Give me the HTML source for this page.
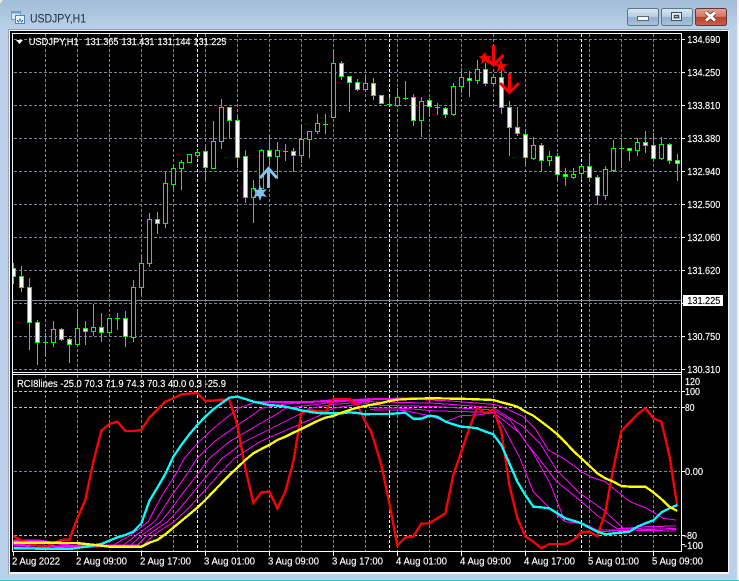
<!DOCTYPE html>
<html>
<head>
<meta charset="utf-8">
<title>USDJPY,H1</title>
<style>
html,body{margin:0;padding:0;width:739px;height:581px;overflow:hidden;background:#b9d1ea}
svg{display:block;position:absolute;left:0;top:0}
text{font-family:"Liberation Sans",sans-serif;font-size:10px;fill:#fff;stroke:#fff;stroke-width:.15px}
.c{shape-rendering:crispEdges;fill:none}
</style>
</head>
<body>
<svg width="739" height="581" viewBox="0 0 739 581" xmlns="http://www.w3.org/2000/svg">
<defs>
<linearGradient id="tb" x1="0" y1="0" x2="0" y2="1"><stop offset="0" stop-color="#a3bcd7"/><stop offset="1" stop-color="#b9d1ea"/></linearGradient>
<linearGradient id="bg" x1="0" y1="0" x2="0" y2="1"><stop offset="0" stop-color="#dbe8f5"/><stop offset=".48" stop-color="#b7cde4"/><stop offset=".52" stop-color="#93afcd"/><stop offset="1" stop-color="#a9c3de"/></linearGradient>
<linearGradient id="rd" x1="0" y1="0" x2="0" y2="1"><stop offset="0" stop-color="#e3a194"/><stop offset=".48" stop-color="#d27866"/><stop offset=".52" stop-color="#b8402c"/><stop offset="1" stop-color="#c9624c"/></linearGradient>
<clipPath id="mc"><rect x="13" y="34" width="668" height="338"/></clipPath>
<clipPath id="sc"><rect x="13" y="375" width="668" height="176"/></clipPath>
</defs>

<!-- window chrome -->
<rect x="0" y="0" width="739" height="581" fill="#b9d1ea"/>
<rect x="0" y="0" width="739" height="30" fill="url(#tb)"/>
<polygon points="0,0 3,0 0,4" fill="#e8e8e8"/>
<rect x="737" y="0" width="2" height="581" fill="#f0f0f0"/>
<rect x="0" y="580" width="739" height="1" fill="#39c6d3"/>
<rect x="8" y="29" width="722" height="545" fill="#f4f4f4"/>
<rect x="8" y="29" width="1" height="545" fill="#9aa6b2"/>
<rect x="8" y="29" width="722" height="1" fill="#8ea3b8"/>
<rect x="729" y="29" width="1" height="545" fill="#cfd4da"/>
<rect x="10" y="31" width="718" height="541" fill="#000"/>

<!-- title -->
<g class="c">
<rect x="11.500" y="11.500" width="9" height="8" fill="#dbe8f6" stroke="#6a9ccc"/>
<rect x="11.500" y="11.500" width="9" height="2" fill="#6a9ccc" stroke="none"/>
<rect x="15.500" y="15.500" width="9" height="8" fill="#eef4fb" stroke="#4b86c0"/>
<path d="M17 20l1.500 2 1.500-3 1.500 3 1.500-2" stroke="#3a70a8"/>
</g>
<text x="30" y="22.500" textLength="56" lengthAdjust="spacingAndGlyphs" style="font-size:12px;fill:#16283a;stroke:none">USDJPY,H1</text>

<!-- buttons -->
<rect x="627.500" y="8.500" width="31" height="17" rx="2" fill="url(#bg)" stroke="#5f7488"/>
<rect x="661.500" y="8.500" width="31" height="17" rx="2" fill="url(#bg)" stroke="#5f7488"/>
<rect x="695.500" y="8.500" width="31" height="17" rx="2" fill="url(#rd)" stroke="#5a3a38"/>
<rect x="637.500" y="16.500" width="11" height="4" fill="#f4f6f8" stroke="#56687a"/>
<rect x="671.500" y="12.500" width="10" height="8" fill="none" stroke="#3f4f60" />
<rect x="672.500" y="13.500" width="8" height="6" fill="none" stroke="#eef2f6"/>
<rect x="674.500" y="15.500" width="4" height="2" fill="#9fb6cc" stroke="#3f4f60"/>
<path d="M706 12.500l9 8M715 12.500l-9 8" stroke="#4a2d2b" stroke-width="4.500"/>
<path d="M706 12.500l9 8M715 12.500l-9 8" stroke="#fff" stroke-width="3"/>

<!-- frame -->
<g class="c" stroke="#fff">
<path d="M12.500 33.500H681.500V551.500H12.500ZM12 372.500H682M12 374.500H682"/>
</g>

<!-- grid -->
<g class="c" stroke="#778899" stroke-dasharray="3 2">
<path d="M14 39.500H680M14 72.500H680M14 105.500H680M14 138.500H680M14 171.500H680M14 204.500H680M14 237.500H680M14 270.500H680M14 303.500H680M14 336.500H680M14 369.500H680M14 471.500H680"/>
<path d="M45.500 34V372M77.500 34V372M109.500 34V372M141.500 34V372M173.500 34V372M205.500 34V372M237.500 34V372M269.500 34V372M301.500 34V372M333.500 34V372M365.500 34V372M397.500 34V372M429.500 34V372M461.500 34V372M493.500 34V372M525.500 34V372M557.500 34V372M589.500 34V372M621.500 34V372M653.500 34V372"/>
<path d="M45.500 375V551M77.500 375V551M109.500 375V551M141.500 375V551M173.500 375V551M205.500 375V551M237.500 375V551M269.500 375V551M301.500 375V551M333.500 375V551M365.500 375V551M397.500 375V551M429.500 375V551M461.500 375V551M493.500 375V551M525.500 375V551M557.500 375V551M589.500 375V551M621.500 375V551M653.500 375V551"/>
</g>
<g class="c" stroke="#fff" stroke-dasharray="3 2">
<path d="M197.500 34V372M389.500 34V372M581.500 34V372M197.500 375V551M389.500 375V551M581.500 375V551"/>
</g>
<g class="c" stroke="#c0c0c0" stroke-dasharray="3 2">
<path d="M14 391.500H680M14 407.500H680M14 535.500H680"/>
</g>
<path class="c" stroke="#778899" d="M13 300.500H681"/>

<!-- candles -->
<g clip-path="url(#mc)">
<path class="c" stroke="#00ff00" d="M13.500 263V284M21.500 266V292M29.500 278V350M37.500 320V365M45.500 333V355M53.500 321V347M61.500 328V341M69.500 338V363M77.500 309V346M85.500 321V345M93.500 304V336M101.500 313V342M109.500 318V334M117.500 313V330M125.500 311V347M133.500 280V342M141.500 255V296M149.500 213V267M157.500 212V234M165.500 172V228M173.500 165V190M181.500 160V190M189.500 154V163M197.500 150V158M205.500 146V181M213.500 121V169M221.500 99V149M229.500 107V138M237.500 117V168M245.500 150V203M253.500 180V223M261.500 149V191M269.500 135V164M277.500 142V179M285.500 144V161M293.500 148V172M301.500 124V163M309.500 131V158M317.500 114V134M325.500 114V134M333.500 50V118M341.500 61V80M349.500 76V112M357.500 79V91M365.500 75V91M373.500 78V100M381.500 95V104M389.500 97V106M397.500 88V106M405.500 81V100M413.500 94V126M421.500 97V137M429.500 98V117M437.500 103V115M445.500 107V118M453.500 83V116M461.500 68V93M469.500 71V97M477.500 60V84M485.500 63V86M493.500 74V85M501.500 70V114M509.500 101V156M517.500 107V136M525.500 129V164M533.500 137V160M541.500 143V172M549.500 151V166M557.500 153V180M565.500 168V186M573.500 168V179M581.500 165V180M589.500 153V179M597.500 175V205M605.500 166V200M613.500 140V172M621.500 140V168M629.500 148V161M637.500 138V156M645.500 131V153M653.500 133V162M661.500 137V160M669.500 143V164M677.500 154V181"/>
<path class="c" stroke="#00ff00" d="M43 342.500h5M115 318.500h5M283 151.500h5M323 124.500h5M387 104.500h5M403 98.500h5M435 107.500h5M619 148.500h5"/>
<path class="c" stroke="#00ff00" style="fill:#fff" d="M11.500 268.500h4v8h-4zM19.500 276.500h4v11h-4zM27.500 287.500h4v35h-4zM35.500 322.500h4v20h-4zM59.500 329.500h4v10h-4zM67.500 339.500h4v5h-4zM83.500 328.500h4v3h-4zM99.500 327.500h4v5h-4zM123.500 318.500h4v18h-4zM155.500 219.500h4v4h-4zM203.500 151.500h4v16h-4zM227.500 107.500h4v13h-4zM235.500 120.500h4v37h-4zM243.500 156.500h4v41h-4zM267.500 150.500h4v6h-4zM291.500 151.500h4v4h-4zM339.500 63.500h4v13h-4zM347.500 76.500h4v6h-4zM355.500 82.500h4v7h-4zM371.500 83.500h4v12h-4zM379.500 95.500h4v8h-4zM411.500 97.500h4v23h-4zM427.500 100.500h4v6h-4zM443.500 108.500h4v6h-4zM467.500 78.500h4v2h-4zM483.500 69.500h4v14h-4zM499.500 77.500h4v30h-4zM507.500 107.500h4v20h-4zM515.500 127.500h4v6h-4zM523.500 134.500h4v23h-4zM539.500 145.500h4v15h-4zM555.500 156.500h4v18h-4zM563.500 174.500h4v2h-4zM587.500 166.500h4v11h-4zM595.500 177.500h4v18h-4zM627.500 148.500h4v2h-4zM643.500 142.500h4v3h-4zM651.500 145.500h4v13h-4zM667.500 144.500h4v16h-4zM675.500 160.500h4v3h-4z"/>
<path class="c" stroke="#00ff00" style="fill:#000" d="M51.500 329.500h4v13h-4zM75.500 328.500h4v16h-4zM91.500 327.500h4v4h-4zM107.500 318.500h4v14h-4zM131.500 287.500h4v50h-4zM139.500 263.500h4v24h-4zM147.500 219.500h4v44h-4zM163.500 183.500h4v40h-4zM171.500 168.500h4v16h-4zM179.500 162.500h4v6h-4zM187.500 154.500h4v8h-4zM195.500 152.500h4v3h-4zM211.500 141.500h4v27h-4zM219.500 107.500h4v34h-4zM251.500 188.500h4v9h-4zM259.500 150.500h4v38h-4zM275.500 150.500h4v6h-4zM299.500 139.500h4v16h-4zM307.500 131.500h4v8h-4zM315.500 123.500h4v8h-4zM331.500 63.500h4v54h-4zM363.500 83.500h4v6h-4zM395.500 97.500h4v8h-4zM419.500 101.500h4v19h-4zM451.500 86.500h4v28h-4zM459.500 77.500h4v9h-4zM475.500 69.500h4v11h-4zM491.500 77.500h4v6h-4zM531.500 145.500h4v13h-4zM547.500 156.500h4v4h-4zM571.500 174.500h4v3h-4zM579.500 166.500h4v7h-4zM603.500 169.500h4v26h-4zM611.500 148.500h4v22h-4zM635.500 142.500h4v8h-4zM659.500 144.500h4v14h-4z"/>
</g>

<!-- arrows and stars -->
<g fill="none" stroke="#87c3ea" stroke-width="3">
<path d="M268.500 168V188M260 178L268.500 168.500 277 178"/>
</g>
<polygon transform="translate(260 193)" fill="#7fc4ec" points="0,-8 1.750,-3 6.900,-4 3.500,0 6.900,4 1.750,3 0,8 -1.750,3 -6.900,4 -3.500,0 -6.900,-4 -1.750,-3"/>
<g fill="#f00">
<polygon transform="translate(485 58.500)" points="0,-7 1.800,-2.300 6.700,-2.200 2.900,.9 4.100,5.700 0,3 -4.100,5.700 -2.900,.9 -6.700,-2.200 -1.800,-2.300"/>
<polygon transform="translate(501 66.500)" points="0,-7 1.800,-2.300 6.700,-2.200 2.900,.9 4.100,5.700 0,3 -4.100,5.700 -2.900,.9 -6.700,-2.200 -1.800,-2.300"/>
</g>
<g fill="none" stroke="#f00" stroke-width="3">
<path d="M493.500 45V64M482.500 55L493.500 65 503.500 55"/>
<path d="M509.500 73V92M500 83L509.500 92.500 519 83"/>
</g>

<!-- RCI lines -->
<g clip-path="url(#sc)" fill="none" shape-rendering="crispEdges">
<g transform="translate(0 375) scale(.33333)">
<g stroke="#f0f" stroke-width="3">
<polyline points="340,510 393,480 445,440 465,400 493,350 526,300 553,250 597,200 652,150 690,120 714,100 760,84 850,80 1110,78"/>
<polyline points="370,510 410,480 464,440 490,400 523,350 559,300 591,250 643,200 713,150 758,120 785,100 850,88 950,78 1110,74"/>
<polyline points="390,512 426,480 483,440 515,400 552,350 591,300 628,250 688,200 773,150 826,120 856,100 950,88 1030,78 1110,74"/>
<polyline points="410,512 443,480 503,440 540,400 581,350 623,300 666,250 734,200 834,150 894,120 928,100 1000,88 1110,80"/>
<polyline points="430,510 460,480 522,440 565,400 611,350 656,300 703,250 780,200 894,150 962,120 999,100 1060,90 1110,84"/>
</g>
<g stroke="#f0f" stroke-width="6">
<polyline points="40,497 120,497 215,512 300,512 420,512"/>
<polyline points="40,517 200,521 260,516 320,513 420,513"/>
<polyline points="40,510 130,512 210,516 300,514"/>
<polyline points="760,81 1000,80 1110,72"/>
<polyline points="890,84 1000,76 1110,76"/>
</g>
<polyline stroke="#f00" stroke-width="7" points="40,483 64,496 88,505 112,512 136,515 184,495 208,494 232,430 256,375 280,260 304,167 328,147 352,140 376,168 400,168 424,165 448,128 472,104 496,80 520,70 544,58 568,56 592,54 616,78 640,77 664,74 688,74 712,150 736,280 760,384 784,352 808,350 832,400 856,350 880,260 904,115 928,105 952,108 976,110 1000,72 1024,72 1048,72 1072,90 1096,140 1110,165"/>
<polyline stroke="#0ff" stroke-width="7" points="40,520 210,522 260,515 304,507 328,497 352,487 376,480 400,470 424,445 448,378 472,338 496,297 520,245 544,210 568,178 592,150 616,125 640,103 664,85 688,68 712,65 736,72 760,80 784,85 808,90 832,92 856,95 880,100 904,106 928,110 952,114 976,115 1000,115 1024,115 1048,112 1072,114 1096,118 1110,118"/>
<polyline stroke="#ff0" stroke-width="7" points="40,503 230,504 304,512 328,515 424,515 448,503 472,495 496,478 520,458 544,438 568,418 592,398 616,375 640,350 664,325 688,300 712,278 736,255 760,235 784,222 808,210 832,195 856,185 880,173 904,162 928,150 952,138 976,128 1000,123 1024,113 1048,105 1072,98 1096,93 1110,90"/>
</g>
<g transform="translate(370 375) scale(.33333)">
<g stroke="#f0f" stroke-width="3">
<polyline points="0,72 120,72 240,78 370,88 400,97 460,125 495,160 535,225 580,250 635,290 660,305 705,320 780,380 830,400 880,430 918,435"/>
<polyline points="0,80 200,85 370,98 420,130 460,155 510,205 560,285 630,355 700,405 760,460 830,455 918,453"/>
<polyline points="0,90 200,95 370,105 420,135 470,205 510,255 560,320 635,380 680,420 740,460 918,463"/>
<polyline points="0,98 100,100 200,108 370,112 450,175 490,235 540,325 585,440 630,445 680,465 760,465 918,468"/>
<polyline points="0,104 100,106 178,122 226,140 274,122 322,120 370,113 400,155 450,250 490,350 540,400 585,440 640,445 690,470 918,460"/>
</g>
<polyline stroke="#f0f" stroke-width="6" points="0,73 120,70"/>
<polyline stroke="#f00" stroke-width="7" points="0,160 10,190 34,270 58,385 82,511 106,487 130,485 154,446 178,445 202,430 226,415 250,300 274,230 298,160 322,98 346,115 370,103 394,170 418,330 442,430 466,484 490,500 514,520 538,507 562,507 586,507 610,495 634,472 658,470 682,484 706,410 730,280 754,168 778,143 802,118 826,100 850,130 874,140 898,240 922,395"/>
<polyline stroke="#0ff" stroke-width="7" points="0,117 34,117 58,117 82,115 106,113 130,131 154,131 178,122 202,125 226,140 250,148 274,155 298,157 322,160 346,170 370,178 394,210 418,265 442,320 466,360 490,395 514,397 538,400 562,415 586,430 610,437 634,445 658,458 682,470 706,478 730,475 754,473 778,470 802,455 826,445 850,436 874,412 898,400 922,390"/>
<polyline stroke="#ff0" stroke-width="7" points="0,90 34,84 58,78 82,74 130,71 178,70 202,70 298,72 370,75 394,82 418,88 442,95 466,110 490,122 514,140 538,158 562,178 586,202 610,228 634,250 658,272 682,295 706,310 730,320 754,333 778,335 802,335 826,335 850,352 874,372 898,395 922,408"/>
</g>
</g>

<!-- ticks -->
<path class="c" stroke="#fff" d="M682 39.500h3M682 72.500h3M682 105.500h3M682 138.500h3M682 171.500h3M682 204.500h3M682 237.500h3M682 270.500h3M682 303.500h3M682 336.500h3M682 369.500h3M682 391.500h3M682 407.500h3M682 471.500h3M682 535.500h3M682 544.500h3M13.500 552v4M77.500 552v4M141.500 552v4M205.500 552v4M269.500 552v4M333.500 552v4M397.500 552v4M461.500 552v4M525.500 552v4M589.500 552v4M653.500 552v4"/>

<!-- OHLC text -->
<polygon points="16,40 23,40 19.500,44" fill="#fff"/>
<text x="28.700" y="45" textLength="50" lengthAdjust="spacingAndGlyphs">USDJPY,H1</text>
<text x="85.500" y="45" textLength="33" lengthAdjust="spacingAndGlyphs">131.365</text>
<text x="121.500" y="45" textLength="33" lengthAdjust="spacingAndGlyphs">131.431</text>
<text x="157.500" y="45" textLength="33" lengthAdjust="spacingAndGlyphs">131.144</text>
<text x="193.500" y="45" textLength="33" lengthAdjust="spacingAndGlyphs">131.225</text>
<text x="17" y="387" textLength="209" lengthAdjust="spacingAndGlyphs">RCI8lines -25.0 70.3 71.9 74.3 70.3 40.0 0.3 -25.9</text>

<!-- price axis -->
<g>
<text x="687.300" y="43" textLength="33" lengthAdjust="spacingAndGlyphs">134.690</text>
<text x="687.300" y="76" textLength="33" lengthAdjust="spacingAndGlyphs">134.250</text>
<text x="687.300" y="109" textLength="33" lengthAdjust="spacingAndGlyphs">133.810</text>
<text x="687.300" y="142" textLength="33" lengthAdjust="spacingAndGlyphs">133.380</text>
<text x="687.300" y="175" textLength="33" lengthAdjust="spacingAndGlyphs">132.940</text>
<text x="687.300" y="208" textLength="33" lengthAdjust="spacingAndGlyphs">132.500</text>
<text x="687.300" y="241" textLength="33" lengthAdjust="spacingAndGlyphs">132.060</text>
<text x="687.300" y="274" textLength="33" lengthAdjust="spacingAndGlyphs">131.620</text>
<text x="687.300" y="340" textLength="33" lengthAdjust="spacingAndGlyphs">130.750</text>
<text x="687.300" y="373" textLength="33" lengthAdjust="spacingAndGlyphs">130.310</text>
<rect x="683" y="295" width="40" height="11" fill="#fff"/>
<text x="687.300" y="304" textLength="33" lengthAdjust="spacingAndGlyphs" style="fill:#000;stroke:#000">131.225</text>
</g>

<!-- indicator axis -->
<text x="685" y="385" textLength="15" lengthAdjust="spacingAndGlyphs">120</text>
<text x="685" y="395" textLength="15" lengthAdjust="spacingAndGlyphs">100</text>
<text x="685" y="411" textLength="9.500" lengthAdjust="spacingAndGlyphs">80</text>
<text x="685" y="475" textLength="18" lengthAdjust="spacingAndGlyphs">0.00</text>
<text x="684" y="539" textLength="13" lengthAdjust="spacingAndGlyphs">-80</text>
<text x="684" y="549" textLength="19" lengthAdjust="spacingAndGlyphs">-100</text>

<!-- time axis -->
<text x="12" y="564.500" textLength="48" lengthAdjust="spacingAndGlyphs">2 Aug 2022</text>
<text x="76" y="564.500" textLength="51" lengthAdjust="spacingAndGlyphs">2 Aug 09:00</text>
<text x="140" y="564.500" textLength="51" lengthAdjust="spacingAndGlyphs">2 Aug 17:00</text>
<text x="204" y="564.500" textLength="51" lengthAdjust="spacingAndGlyphs">3 Aug 01:00</text>
<text x="268" y="564.500" textLength="51" lengthAdjust="spacingAndGlyphs">3 Aug 09:00</text>
<text x="332" y="564.500" textLength="51" lengthAdjust="spacingAndGlyphs">3 Aug 17:00</text>
<text x="396" y="564.500" textLength="51" lengthAdjust="spacingAndGlyphs">4 Aug 01:00</text>
<text x="460" y="564.500" textLength="51" lengthAdjust="spacingAndGlyphs">4 Aug 09:00</text>
<text x="524" y="564.500" textLength="51" lengthAdjust="spacingAndGlyphs">4 Aug 17:00</text>
<text x="588" y="564.500" textLength="51" lengthAdjust="spacingAndGlyphs">5 Aug 01:00</text>
<text x="652" y="564.500" textLength="51" lengthAdjust="spacingAndGlyphs">5 Aug 09:00</text>
</svg>
</body>
</html>
